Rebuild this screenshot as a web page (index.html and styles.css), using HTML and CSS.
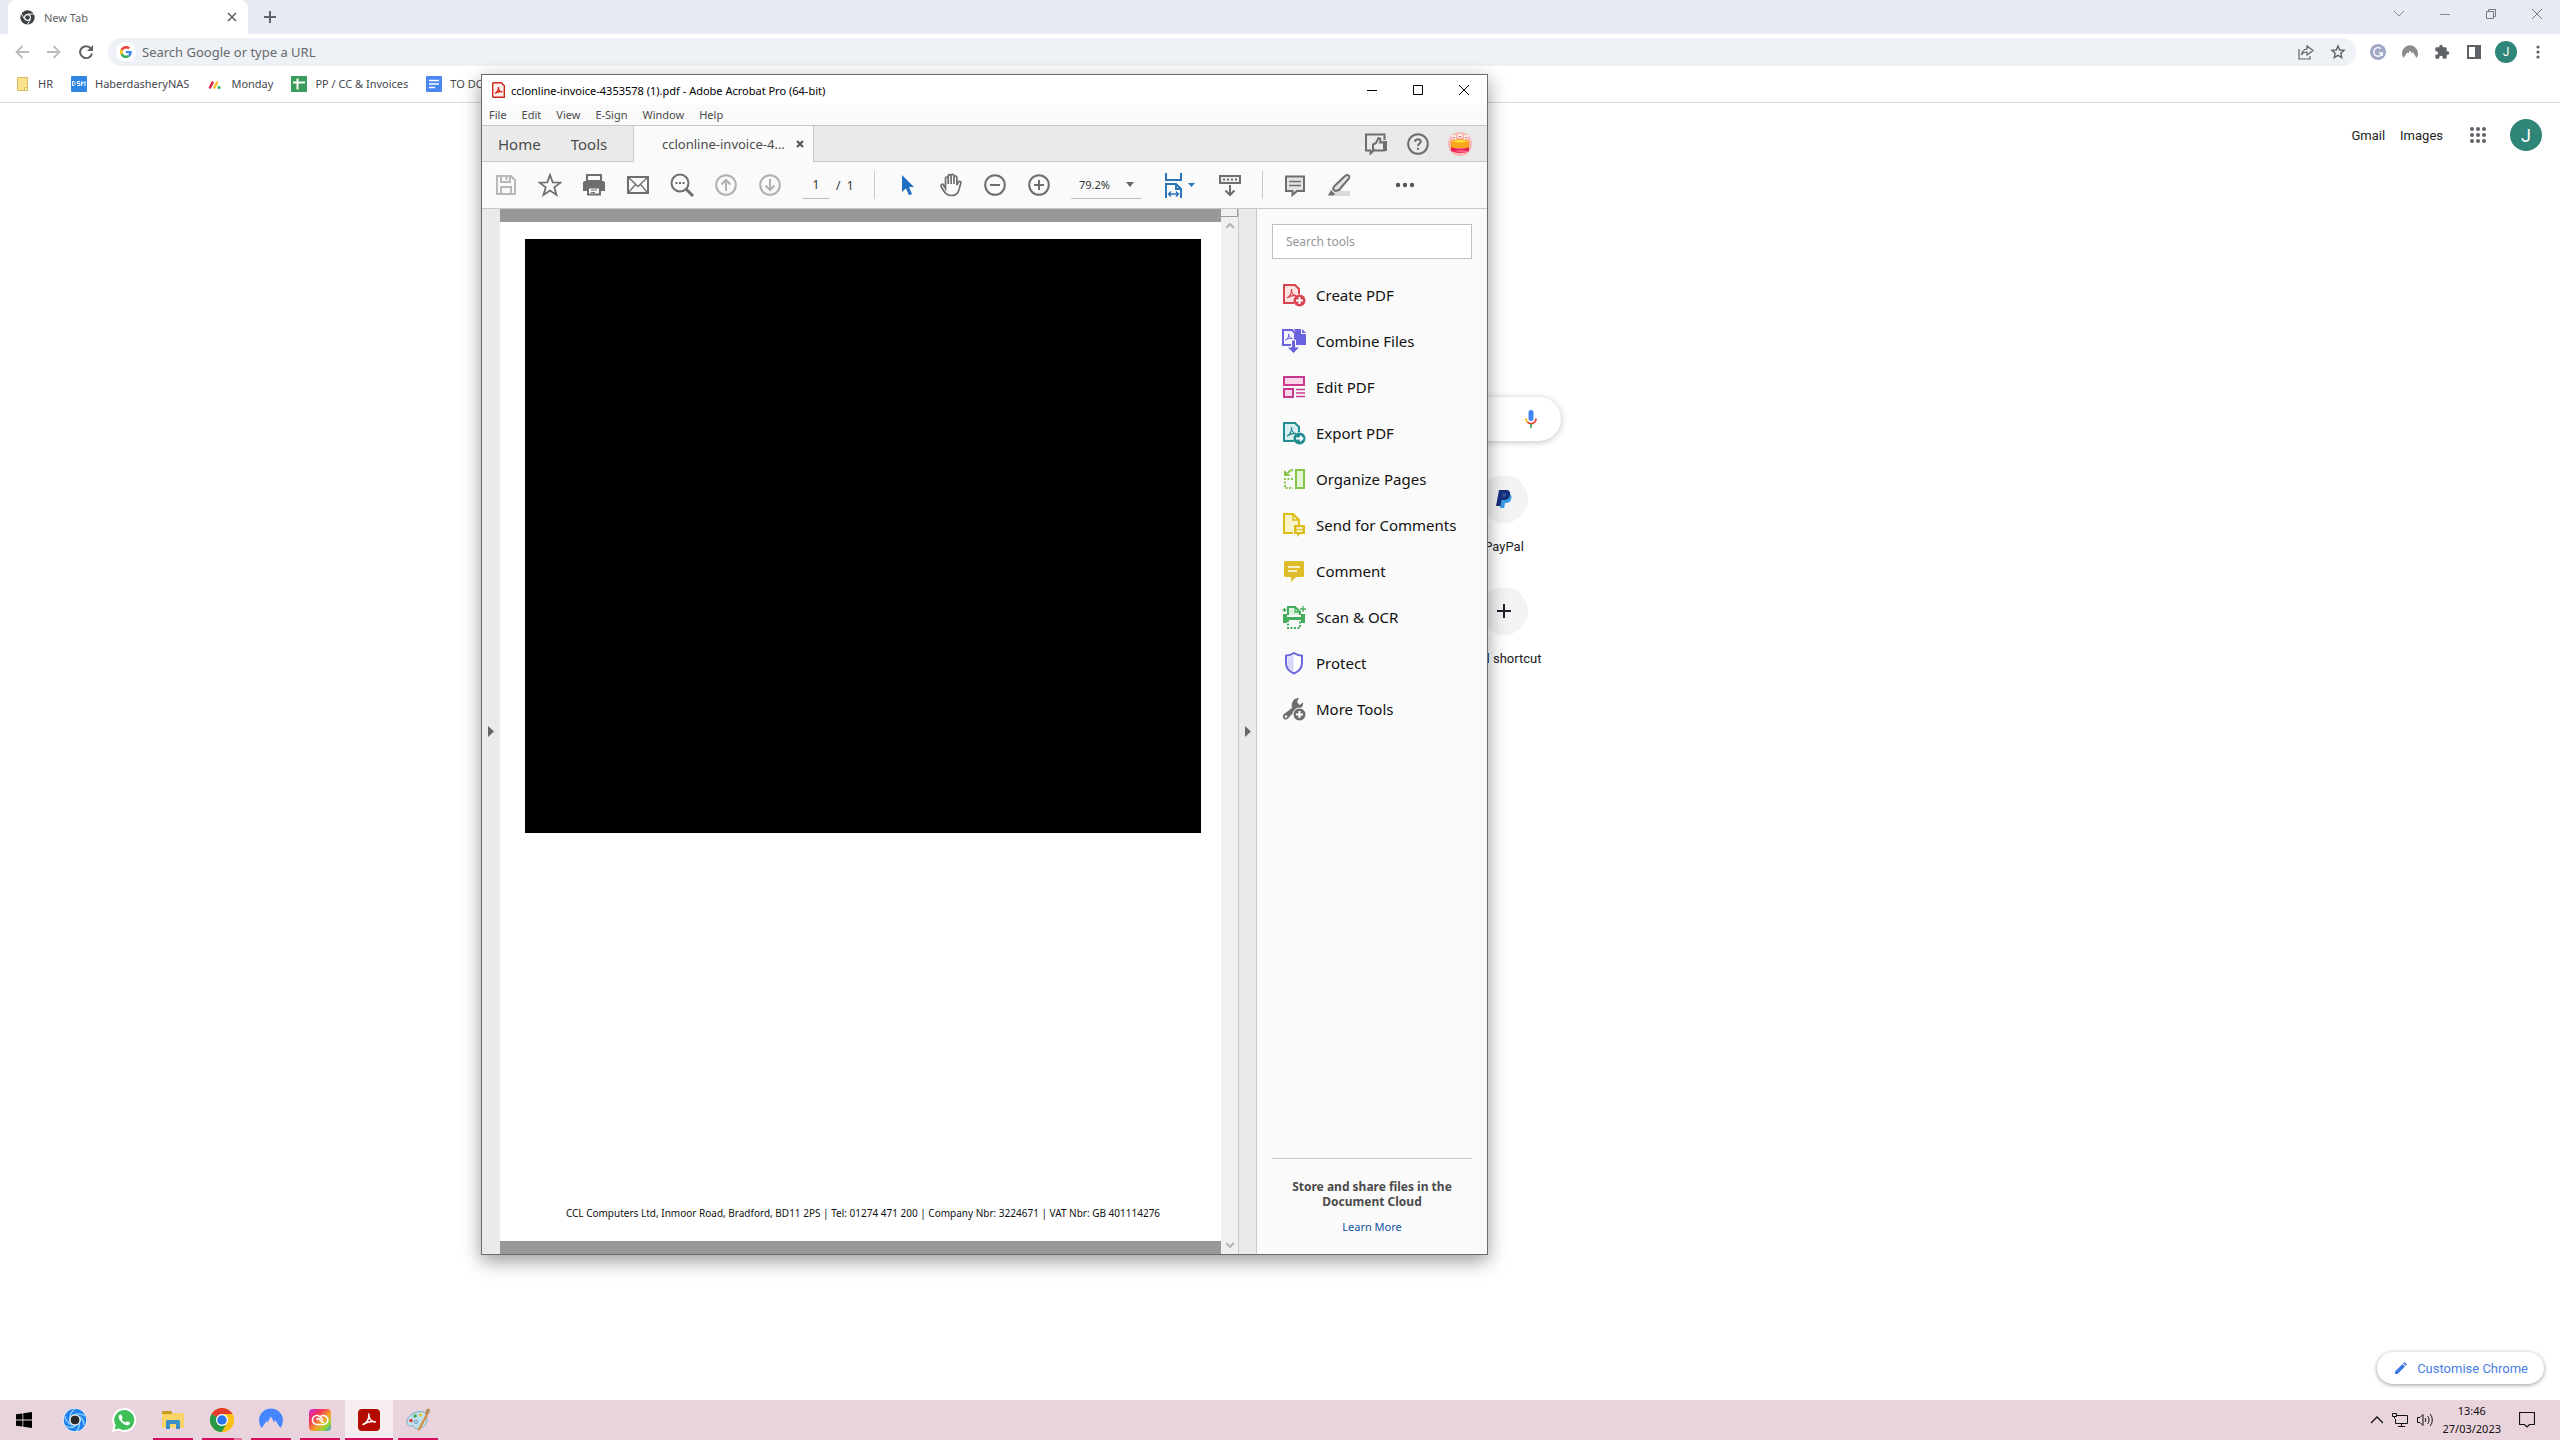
FILE: index.html
```html
<!DOCTYPE html>
<html lang="en">
<head>
    <meta charset="UTF-8">
    <meta name="viewport" content="width=device-width, initial-scale=1.0">
    <title>New Tab</title>
    <link rel="stylesheet" href="styles.css">
</head>
<body>
    <div class="desktop">

    <!-- Browser -->
    <div class="browser">
        <div class="tab-strip">
            <div class="browser-tab">
                <svg class="tab-logo" viewBox="0 0 48 48"><circle cx="24" cy="24" r="23" fill="#3c4043"/><circle cx="24" cy="24" r="11" fill="#fff"/><circle cx="24" cy="24" r="7.500" fill="#3c4043"/><path d="M24 13h22M14.500 29.500l-11-19M33.500 29.500l-11 19" stroke="#fff" stroke-width="3" fill="none"/></svg>
                <span class="tab-title">New Tab</span>
                <button class="plain" aria-label="Close tab"><svg width="10" height="10" viewBox="0 0 10 10"><path d="M1 1l8 8M9 1l-8 8" stroke="#5f6368" stroke-width="1.600"/></svg></button>
            </div>
            <button class="plain new-tab" aria-label="New tab"><svg width="12" height="12" viewBox="0 0 12 12"><path d="M6 0v12M0 6h12" stroke="#5f6368" stroke-width="2"/></svg></button>
            <div class="browser-controls">
                <button class="plain" aria-label="Search tabs"><svg width="10" height="10" viewBox="0 0 10 10"><path d="M0 2l5 5 5-5" stroke="#8a8d93" fill="none"/></svg></button>
                <button class="plain" aria-label="Minimise"><svg width="10" height="10" viewBox="0 0 10 10"><path d="M0 5.500h10" stroke="#8a8d93"/></svg></button>
                <button class="plain" aria-label="Restore"><svg width="10" height="10" viewBox="0 0 10 10"><path d="M.5 2.500h7v7h-7zM2.500 2.500v-2h7v7h-2" stroke="#777a80" fill="none"/></svg></button>
                <button class="plain" aria-label="Close"><svg width="10" height="10" viewBox="0 0 10 10"><path d="M0 0l10 10M10 0L0 10" stroke="#777a80"/></svg></button>
            </div>
        </div>

        <div class="nav-bar">
            <div class="nav-buttons">
                <button class="plain" aria-label="Back"><svg width="14" height="14" viewBox="0 0 14 14"><path d="M14 7H1.500M7.500 1l-6 6 6 6" stroke="#b9bbbe" stroke-width="1.800" fill="none"/></svg></button>
                <button class="plain" aria-label="Forward"><svg width="14" height="14" viewBox="0 0 14 14"><path d="M0 7h12.500M6.500 1l6 6-6 6" stroke="#b9bbbe" stroke-width="1.800" fill="none"/></svg></button>
                <button class="plain" aria-label="Reload"><svg width="14" height="14" viewBox="0 0 14 14"><path d="M12 3.600A6 6 0 1 0 13 8.500" stroke="#5f6368" stroke-width="2" fill="none"/><path d="M14 0v6H8z" fill="#5f6368"/></svg></button>
            </div>
            <div class="omnibox">
                <span class="g-badge"><svg width="12" height="12" viewBox="0 0 48 48"><path fill="#ea4335" d="M24 9.500c3.540 0 6.710 1.220 9.210 3.600l6.850-6.850C35.900 2.380 30.470 0 24 0 14.620 0 6.510 5.380 2.560 13.220l7.980 6.190C12.430 13.720 17.740 9.500 24 9.500z"/><path fill="#4285f4" d="M46.980 24.550c0-1.570-.15-3.090-.38-4.550H24v9.020h12.940c-.58 2.960-2.260 5.480-4.780 7.180l7.730 6c4.510-4.180 7.090-10.360 7.090-17.650z"/><path fill="#fbbc05" d="M10.530 28.590a14.500 14.500 0 0 1 0-9.180l-7.980-6.190a24 24 0 0 0 0 21.560z"/><path fill="#34a853" d="M24 48c6.480 0 11.930-2.130 15.890-5.810l-7.730-6c-2.150 1.450-4.920 2.300-8.160 2.300-6.260 0-11.570-4.220-13.470-9.910l-7.980 6.190C6.510 42.620 14.620 48 24 48z"/></svg></span>
                <input class="omnibox-input" type="text" placeholder="Search Google or type a URL" aria-label="Search Google or type a URL">
                <button class="plain" aria-label="Share"><svg width="16" height="16" viewBox="0 0 16 16"><path d="M1 5v10h11v-3M9 5V2l6 4.500L9 11V8C6 8 4.500 9 3.500 11 4 7.500 6 5.300 9 5z" stroke="#5f6368" stroke-width="1.200" fill="none"/></svg></button>
                <button class="plain" aria-label="Bookmark"><svg width="16" height="16" viewBox="0 0 16 16"><path d="M8 2l1.700 4 4.400.4-3.300 2.900 1 4.200L8 11.300l-3.800 2.200 1-4.200-3.300-2.900 4.400-.4z" stroke="#5f6368" stroke-width="1.400" fill="none"/></svg></button>
            </div>
            <div class="extensions">
                <button class="plain" aria-label="Grammarly"><svg width="16" height="16" viewBox="0 0 16 16"><circle cx="8" cy="8" r="8" fill="#a0a7c7"/><path d="M11 4.800A4.300 4.300 0 1 0 12.200 9H8.800M12.200 9v3" stroke="#fff" stroke-width="1.400" fill="none"/></svg></button>
                <button class="plain" aria-label="NordVPN"><svg width="16" height="16" viewBox="0 0 16 16"><path d="M1.500 14A8 8 0 1 1 14.500 14l-3.600-6-1 1.400L8 6.500 6 9.700 5.200 8.300z" fill="#8c8c8c"/></svg></button>
                <button class="plain" aria-label="Extensions"><svg width="16" height="16" viewBox="0 0 24 24"><path d="M20.500 11H19V7a2 2 0 0 0-2-2h-4V3.500a2.500 2.500 0 0 0-5 0V5H4a2 2 0 0 0-2 2v3.800h1.500a2.700 2.700 0 0 1 0 5.400H2V20a2 2 0 0 0 2 2h3.800v-1.500a2.700 2.700 0 0 1 5.400 0V22H17a2 2 0 0 0 2-2v-4h1.500a2.500 2.500 0 0 0 0-5z" fill="#5f6368"/></svg></button>
                <button class="plain" aria-label="Side panel"><svg width="16" height="16" viewBox="0 0 16 16"><path d="M1 1h14v14H1zM3 3v10h6V3z" fill="#5f6368" fill-rule="evenodd"/></svg></button>
                <button class="plain avatar" aria-label="Profile">J</button>
                <button class="plain" aria-label="Menu"><svg width="16" height="16" viewBox="0 0 16 16"><g fill="#5f6368"><circle cx="8" cy="3" r="1.600"/><circle cx="8" cy="8" r="1.600"/><circle cx="8" cy="13" r="1.600"/></g></svg></button>
            </div>
        </div>

        <div class="bookmarks">
            <a class="bookmark" href="#"><svg width="16" height="16" viewBox="0 0 16 16"><path d="M3.500 1.500h10v13h-10z" fill="#fce28e" stroke="#d9bd5b"/><path d="M10.500 11.500h3v3h-3z" fill="#fff3c4" stroke="#d9bd5b"/></svg>HR</a>
            <a class="bookmark" href="#"><svg width="16" height="16" viewBox="0 0 16 16"><rect width="16" height="16" rx="1" fill="#2f86e5"/><path d="M1.500 5.500v4H3l1-1v-2l-1-1zM9 5.500H6.500v2H9v2H6.200M10.700 10V5.500l1.600 2 1.700-2V10" stroke="#fff" fill="none"/></svg>HaberdasheryNAS</a>
            <a class="bookmark" href="#"><svg width="16" height="16" viewBox="0 0 16 16"><path d="M3 11.500l2.500-5" stroke="#e0234e" stroke-width="2.600" stroke-linecap="round"/><path d="M7.500 11.500l2.500-5" stroke="#fbc02d" stroke-width="2.600" stroke-linecap="round"/><circle cx="12" cy="11.500" r="1.500" fill="#27ae60"/></svg>Monday</a>
            <a class="bookmark" href="#"><svg width="16" height="16" viewBox="0 0 16 16"><rect width="16" height="16" rx="1" fill="#3a9b5b"/><path d="M2 6.500h12M6.500 2.500v11" stroke="#fff" stroke-width="2"/></svg>PP / CC &amp; Invoices</a>
            <a class="bookmark" href="#"><svg width="16" height="16" viewBox="0 0 16 16"><rect width="16" height="16" rx="1" fill="#4a86f0"/><path d="M3 4.500h10M3 8h10M3 11.500h6" stroke="#fff" stroke-width="1.700"/></svg>TO DO</a>
        </div>

        <div class="new-tab-page">
            <div class="page-links">
                <a href="#">Gmail</a>
                <a href="#">Images</a>
                <button class="plain apps" aria-label="Google apps"><svg width="16" height="16" viewBox="0 0 16 16"><g fill="#5f6368"><circle cx="2" cy="2" r="2"/><circle cx="8" cy="2" r="2"/><circle cx="14" cy="2" r="2"/><circle cx="2" cy="8" r="2"/><circle cx="8" cy="8" r="2"/><circle cx="14" cy="8" r="2"/><circle cx="2" cy="14" r="2"/><circle cx="8" cy="14" r="2"/><circle cx="14" cy="14" r="2"/></g></svg></button>
                <button class="plain avatar avatar-large" aria-label="Account">J</button>
            </div>
            <div class="fakebox">
                <input class="fakebox-input" type="text" aria-label="Search">
                <button class="plain" aria-label="Search by voice"><svg width="12" height="18" viewBox="0 0 12 18"><rect x="3.500" width="5" height="11" rx="2.500" fill="#4285f4"/><path d="M1 8.500a5 5 0 0 0 1.500 3.700" stroke="#fbbc05" stroke-width="1.700" fill="none"/><path d="M2.500 12.200A5 5 0 0 0 11 8.500" stroke="#ea4335" stroke-width="1.700" fill="none"/><path d="M6 14v4" stroke="#34a853" stroke-width="1.700"/></svg></button>
            </div>
            <div class="shortcuts">
                <a class="shortcut" href="#">
                    <span class="shortcut-icon"><svg width="16" height="18" viewBox="0 0 16 18"><path d="M5 4h7c3 0 4 2 3.300 4.800C14.600 11.600 13 13 10 13H9l-.8 5H4z" fill="#3b9be0"/><path d="M3 0h7c3.500 0 4.600 2 4 5-.7 3.300-2.600 5-6 5H5.500L4.500 16H0z" fill="#14307c"/><path d="M6.500 3.500h2.700c1.300 0 1.600.7 1.400 1.600-.3 1.100-1 1.600-2.400 1.600H6z" fill="#3a539b"/></svg></span>
                    PayPal
                </a>
                <a class="shortcut" href="#">
                    <span class="shortcut-icon"><svg width="14" height="14" viewBox="0 0 14 14"><path d="M7 0v14M0 7h14" stroke="#202124" stroke-width="2"/></svg></span>
                    Add shortcut
                </a>
            </div>
            <button class="customise"><svg width="12" height="12" viewBox="0 0 12 12"><path d="M0 12V9.500L7.500 2 10 4.500 2.500 12zM8.200 1.300L9.500 0 12 2.500l-1.300 1.300z" fill="#3b78e7"/></svg>Customise Chrome</button>
        </div>
    </div>

    <!-- Acrobat window -->
    <div class="acrobat">
        <div class="title-bar">
            <svg width="13" height="16" viewBox="0 0 13 16"><path d="M1.500.7h7.800l3 3v11.600H1.500a.9.9 0 0 1-.8-.9V1.600a.9.900 0 0 1 .8-.9z" fill="#fff0ee" stroke="#c9271b" stroke-width="1.400"/><path d="M3 11.500c2-.6 3.600-3.600 3.400-6.500 0 3 1.500 5 4 5-2.500-.8-5-.2-7.400 1.500z" stroke="#d6261a" stroke-width="1.300" fill="none"/></svg>
            <span class="window-title">cclonline-invoice-4353578 (1).pdf - Adobe Acrobat Pro (64-bit)</span>
            <button class="plain window-button" aria-label="Minimise"><svg width="10" height="10" viewBox="0 0 10 10"><path d="M0 5.500h10" stroke="#000"/></svg></button>
            <button class="plain window-button" aria-label="Maximise"><svg width="10" height="10" viewBox="0 0 10 10"><path d="M.5.500h9v9h-9z" stroke="#000" fill="none"/></svg></button>
            <button class="plain window-button" aria-label="Close"><svg width="10" height="10" viewBox="0 0 10 10"><path d="M0 0l10 10M10 0L0 10" stroke="#000"/></svg></button>
        </div>
        <div class="menu-bar">
            <button class="plain">File</button>
            <button class="plain">Edit</button>
            <button class="plain">View</button>
            <button class="plain">E-Sign</button>
            <button class="plain">Window</button>
            <button class="plain">Help</button>
        </div>
        <div class="doc-tabs">
            <div class="main-tabs">
                <button class="plain">Home</button>
                <button class="plain">Tools</button>
            </div>
            <div class="doc-tab">
                <span class="doc-name">cclonline-invoice-4...</span>
                <button class="plain" aria-label="Close document"><svg width="8" height="8" viewBox="0 0 8 8"><path d="M1 1l6 6M7 1L1 7" stroke="#555" stroke-width="2"/></svg></button>
            </div>
            <div class="tab-tools">
                <button class="plain" aria-label="Feedback"><svg width="24" height="22" viewBox="0 0 24 22"><path d="M20.500 7V1.500H2v16h4.500v3l3-3H9" stroke="#6e6e6e" stroke-width="2" fill="none"/><path d="M9 11.500l3-1.500 2.500-5c2 0 2.300 1.500 1.600 4.500H20v8h-9l-2-1.500z" fill="#eaeaea" stroke="#6e6e6e" stroke-width="2"/><path d="M19 8h4v10h-4z" fill="#6e6e6e"/></svg></button>
                <button class="plain" aria-label="Help"><svg width="22" height="22" viewBox="0 0 22 22"><circle cx="11" cy="11" r="9.800" stroke="#6e6e6e" stroke-width="2" fill="none"/><path d="M8 8.800C8 5.300 14 5.500 13.800 8.600 13.700 10.500 11 10.700 11 13M11 14.700v2" stroke="#6e6e6e" stroke-width="2" fill="none"/></svg></button>
                <button class="plain" aria-label="Account"><svg width="24" height="24" viewBox="0 0 24 24"><circle cx="12" cy="12" r="12" fill="#f8b9b4"/><g fill="#fff"><circle cx="6" cy="5" r="2"/><circle cx="12" cy="4" r="2"/><circle cx="18" cy="5" r="2"/></g><g fill="#c33"><circle cx="6" cy="5.500" r=".8"/><circle cx="12" cy="4.500" r=".8"/><circle cx="18" cy="5.500" r=".8"/></g><path d="M3 9c5-2.500 13-2.500 18 0v7H3z" fill="#f9a51b"/><path d="M4 9c5-1.500 11-1.500 16 0-5 2-11 2-16 0z" fill="#ffdf3e"/><path d="M3 15c5 2 13 2 18 0v4c-5 2.500-13 2.500-18 0z" fill="#e8204f"/><path d="M5 19l12 2 3-2-6-1z" fill="#ff5d8d"/></svg></button>
            </div>
        </div>

        <div class="tool-bar">
            <button class="plain tool" aria-label="Save"><svg width="24" height="24" viewBox="0 0 24 24"><path d="M3 3h14l4 4v14H3zM7 3v6h9V3M7 21v-7h10v7M12.500 4v3" stroke="#b8b8b8" stroke-width="2" fill="none"/></svg></button>
            <button class="plain tool" aria-label="Star"><svg width="24" height="24" viewBox="0 0 24 24"><path d="M12 2l2.700 7.300 7.800.3-6.200 4.800 2.200 7.500L12 17.600l-6.500 4.300 2.200-7.500-6.200-4.800 7.800-.3z" stroke="#6e6e6e" stroke-width="1.800" fill="none"/></svg></button>
            <button class="plain tool" aria-label="Print"><svg width="24" height="24" viewBox="0 0 24 24"><path d="M5 2h14v6H5z" stroke="#6e6e6e" stroke-width="2" fill="none"/><path d="M3 8h18a2 2 0 0 1 2 2v8H1v-8a2 2 0 0 1 2-2z" fill="#6e6e6e"/><path d="M6 14.500h12v7H6z" fill="#fafafa" stroke="#6e6e6e" stroke-width="2"/><path d="M9 17h6M9 19.500h4" stroke="#6e6e6e" stroke-width="1.200"/></svg></button>
            <button class="plain tool" aria-label="Email"><svg width="24" height="24" viewBox="0 0 24 24"><path d="M2 4h20v16H2z" stroke="#6e6e6e" stroke-width="2" fill="none"/><path d="M2 4l10 9.500L22 4M2 20l7.500-8.500M22 20l-7.500-8.500" stroke="#6e6e6e" stroke-width="1.300" fill="none"/></svg></button>
            <button class="plain tool" aria-label="Find"><svg width="24" height="24" viewBox="0 0 24 24"><circle cx="10" cy="10" r="8.500" stroke="#6e6e6e" stroke-width="2" fill="none"/><path d="M16 16l7 7" stroke="#6e6e6e" stroke-width="3"/><path d="M5.500 10h2M9 10h2M12.500 10h2" stroke="#6e6e6e" stroke-width="2"/></svg></button>
            <button class="plain tool" aria-label="Previous page"><svg width="24" height="24" viewBox="0 0 24 24"><circle cx="12" cy="12" r="9.800" stroke="#b0b0b0" stroke-width="2" fill="none"/><path d="M12 18V7M7.500 11.500L12 7l4.500 4.500" stroke="#b0b0b0" stroke-width="2" fill="none"/></svg></button>
            <button class="plain tool" aria-label="Next page"><svg width="24" height="24" viewBox="0 0 24 24"><circle cx="12" cy="12" r="9.800" stroke="#b0b0b0" stroke-width="2" fill="none"/><path d="M12 6v11M7.500 12.500L12 17l4.500-4.500" stroke="#b0b0b0" stroke-width="2" fill="none"/></svg></button>
            <label class="page-box"><input class="page-input" type="text" value="1" aria-label="Page"><span>/&nbsp; 1</span></label>
            <span class="divider"></span>
            <button class="plain tool" aria-label="Select"><svg width="24" height="24" viewBox="0 0 24 24"><path d="M7 2l12 12h-5l3 7-3 1.200-3-7L7 19z" fill="#1f6fc2"/></svg></button>
            <button class="plain tool" aria-label="Hand"><svg width="24" height="24" viewBox="0 0 24 24"><path d="M6.500 15.500V5.500c0-2 2.700-2 2.700 0V11 3.200c0-2 2.900-2 2.900 0V11 2.800c0-2 2.900-2 2.900 0V11 4.500c0-2 2.900-2 2.900 0V12l1.300-2.500c1-1.800 3.300-1 2.600.8C20 15 20.500 22.500 13 22.500c-6 0-8-3.500-10.800-9-.9-2 1.200-3 2.300-1.500z" stroke="#6e6e6e" stroke-width="1.700" fill="none"/></svg></button>
            <button class="plain tool" aria-label="Zoom out"><svg width="24" height="24" viewBox="0 0 24 24"><circle cx="12" cy="12" r="9.800" stroke="#6e6e6e" stroke-width="2" fill="none"/><path d="M7 12h10" stroke="#6e6e6e" stroke-width="2"/></svg></button>
            <button class="plain tool" aria-label="Zoom in"><svg width="24" height="24" viewBox="0 0 24 24"><circle cx="12" cy="12" r="9.800" stroke="#6e6e6e" stroke-width="2" fill="none"/><path d="M7 12h10M12 7v10" stroke="#6e6e6e" stroke-width="2"/></svg></button>
            <button class="zoom-level">79.2%<svg width="8" height="5" viewBox="0 0 8 5"><path d="M0 0h8L4 5z" fill="#666"/></svg></button>
            <button class="plain fit" aria-label="Fit width"><svg width="30" height="26" viewBox="0 0 30 26"><path d="M1 1v7h15V1M1 26V12h10l5 5v9M11 12v5h5" stroke="#2a74b8" stroke-width="2" fill="none"/><path d="M4 22h9M6 19.500L3.500 22 6 24.500M11 19.500l2.500 2.500-2.500 2.500" stroke="#2a74b8" stroke-width="1.400" fill="none"/><path d="M23 11h7l-3.500 4z" fill="#2a74b8"/></svg></button>
            <button class="plain tool" aria-label="Page display"><svg width="24" height="24" viewBox="0 0 24 24"><path d="M2 3h20v7H2z" stroke="#6e6e6e" stroke-width="2" fill="#eee"/><path d="M5 6.500h2M9 6.500h2M13 6.500h2M17 6.500h2" stroke="#6e6e6e" stroke-width="2"/><path d="M12 12v10M7.500 17.500L12 22l4.500-4.500" stroke="#6e6e6e" stroke-width="2" fill="none"/></svg></button>
            <span class="divider divider-wide"></span>
            <button class="plain tool" aria-label="Add comment"><svg width="24" height="24" viewBox="0 0 24 24"><path d="M3 3.500h18V18h-7l-4.500 4V18H3z" stroke="#6e6e6e" stroke-width="2" fill="#e4e4e4"/><path d="M6 8.500h12M6 12.500h12" stroke="#6e6e6e" stroke-width="1.500"/></svg></button>
            <button class="plain tool" aria-label="Highlight"><svg width="24" height="24" viewBox="0 0 24 24"><path d="M8 18h15v5H6z" fill="#dadada"/><path d="M7 13.500L18 3c3-2.500 5.500 0 3.500 3L12 17l-4 1-2-2z" stroke="#6e6e6e" stroke-width="2" fill="#e4e4e4"/><path d="M4 17l4 4-2 1.500H1z" fill="#6e6e6e"/></svg></button>
            <button class="plain more" aria-label="More"><svg width="20" height="6" viewBox="0 0 20 6"><g fill="#555"><circle cx="3" cy="3" r="2.200"/><circle cx="10" cy="3" r="2.200"/><circle cx="17" cy="3" r="2.200"/></g></svg></button>
        </div>

        <div class="workspace">
            <button class="side-strip" aria-label="Show navigation pane"><svg width="6" height="11" viewBox="0 0 6 11"><path d="M0 0l6 5.500L0 11z" fill="#666"/></svg></button>
            <div class="document">
                <div class="page">
                    <div class="redacted"></div>
                    <p class="page-footer">CCL Computers Ltd, Inmoor Road, Bradford, BD11 2PS | Tel: 01274 471 200 | Company Nbr: 3224671 | VAT Nbr: GB 401114276</p>
                </div>
            </div>
            <div class="scroll-track">
                <div class="scroll-top">
                    <span class="split-box"></span>
                    <svg width="8" height="6" viewBox="0 0 8 6"><path d="M0 5l4-4 4 4" stroke="#b5b5b5" stroke-width="2" fill="none"/></svg>
                </div>
                <svg width="8" height="6" viewBox="0 0 8 6"><path d="M0 1l4 4 4-4" stroke="#b5b5b5" stroke-width="2" fill="none"/></svg>
            </div>
            <button class="side-strip side-strip-right" aria-label="Hide tools pane"><svg width="6" height="11" viewBox="0 0 6 11"><path d="M0 0l6 5.500L0 11z" fill="#666"/></svg></button>
            <div class="tools-panel">
                <input class="tool-search" type="text" placeholder="Search tools" aria-label="Search tools">
                <div class="tool-list">
                    <button class="plain tool-item"><svg width="24" height="24" viewBox="0 0 24 24"><path d="M12 20H2V2h11l4 4v5" stroke="#d7434e" stroke-width="2" fill="#fde3e3"/><path d="M5 15c3-1 5-5 4.500-9 0 4 2 6.500 4.500 6.500-3-.5-6 .5-9 2.500z" stroke="#d7434e" stroke-width="1.200" fill="none"/><circle cx="17.500" cy="17.500" r="6" fill="#d7434e"/><path d="M17.500 14v7M14 17.500h7" stroke="#fff" stroke-width="2"/></svg>Create PDF</button>
                    <button class="plain tool-item"><svg width="24" height="24" viewBox="0 0 24 24"><path d="M1 1h9l3 3v12H1z" stroke="#6a63e0" stroke-width="2" fill="#f6f5ff"/><path d="M3.500 11c2-.7 3.500-3.300 3.200-6 0 2.700 1.300 4.500 3.800 4.500-2-.3-4.500 0-7 1.500z" stroke="#6a63e0" fill="none"/><path d="M12 0h7v5h5v11H14V4z" fill="#6a63e0"/><path d="M20 0l4 4h-4z" fill="#6a63e0"/><path d="M9.500 11h4v7h4.500l-6.500 6.500L5 18h4.500z" fill="#6a63e0" stroke="#fff"/></svg>Combine Files</button>
                    <button class="plain tool-item"><svg width="24" height="24" viewBox="0 0 24 24"><path d="M2 2h20v8H2zM2 14h9v8H2z" stroke="#c8388d" stroke-width="2" fill="#fbd5ea"/><path d="M14 14.500h9M14 18h9M14 21.500h9" stroke="#c8388d" stroke-width="1.300"/></svg>Edit PDF</button>
                    <button class="plain tool-item"><svg width="24" height="24" viewBox="0 0 24 24"><path d="M12 20H2V2h11l4 4v5" stroke="#208d8f" stroke-width="2" fill="#d9efef"/><path d="M5 15c3-1 5-5 4.500-9 0 4 2 6.500 4.500 6.500-3-.5-6 .5-9 2.500z" stroke="#208d8f" stroke-width="1.200" fill="none"/><circle cx="17.500" cy="17.500" r="6" fill="#208d8f"/><path d="M14 17.500h6M18 15l2.500 2.500L18 20" stroke="#fff" stroke-width="1.800" fill="none"/></svg>Export PDF</button>
                    <button class="plain tool-item"><svg width="24" height="24" viewBox="0 0 24 24"><path d="M14 3h8v18h-8z" stroke="#84c64a" stroke-width="2" fill="#e4f6d4"/><path d="M11 12H3v9h8" stroke="#84c64a" stroke-width="2" stroke-dasharray="2 1.500" fill="none"/><path d="M11 3c-3 0-4 1-5 3" stroke="#84c64a" stroke-width="2" fill="none"/><path d="M2 3v6h7z" fill="#84c64a"/></svg>Organize Pages</button>
                    <button class="plain tool-item"><svg width="24" height="24" viewBox="0 0 24 24"><path d="M11 20H2V1h9l6 6v5" stroke="#dcbc16" stroke-width="2" fill="#fbf3c8"/><path d="M11 1v6h6" stroke="#dcbc16" stroke-width="1.500" fill="none"/><path d="M12 12h11v9h-5l-3 3v-3h-3z" fill="#dcbc16"/><path d="M14.500 15h6M14.500 18h6" stroke="#fff" stroke-width="1.300"/></svg>Send for Comments</button>
                    <button class="plain tool-item"><svg width="24" height="24" viewBox="0 0 24 24"><path d="M3 2h18l1 1v14l-1 1h-7l-5 5v-5H3l-1-1V3z" fill="#dfbd2a"/><path d="M6 8h12M6 12h9" stroke="#fff" stroke-width="1.600"/></svg>Comment</button>
                    <button class="plain tool-item"><svg width="24" height="24" viewBox="0 0 24 24"><path d="M6 10V2h7l5 5v3" stroke="#43ad5b" stroke-width="2" fill="#d8f2dd"/><path d="M1 9h4v3h14V9h4v9h-4v-3H5v3H1z" fill="#43ad5b"/><path d="M6 15v8h12v-8" stroke="#43ad5b" stroke-width="2" stroke-dasharray="2 1.500" fill="none"/><path d="M13 2v5h5M21 1v6M18 4h6M2.500 3v4M.5 5h4" stroke="#43ad5b" stroke-width="1.300" fill="none"/></svg>Scan &amp; OCR</button>
                    <button class="plain tool-item"><svg width="24" height="24" viewBox="0 0 24 24"><path d="M12 2c2.500 1.800 5 2.500 8 2.700V12c0 5-3.500 8.500-8 10.500C7.500 20.500 4 17 4 12V4.700C7 4.500 9.500 3.800 12 2z" stroke="#6c66de" stroke-width="2" fill="#fff"/><path d="M11.500 4C9.500 5.300 7.500 6 5.500 6v6c0 4 2.500 7 6 8.800z" fill="#d9d7f8"/></svg>Protect</button>
                    <button class="plain tool-item"><svg width="24" height="24" viewBox="0 0 24 24"><path d="M2 22c-2-2-1-4 0-5l8-6C9 6 11 1 17 1l-2 4 2.500 3L21 5.500c.5 3-1 5.500-4 6a8 8 0 0 0-5.500 4L6 21.500c-1 1-3 1.500-4 .5z" fill="#6e6e6e"/><circle cx="4" cy="19.500" r="1.200" fill="#fff"/><circle cx="17.500" cy="17.500" r="6.500" fill="#6e6e6e" stroke="#fafafa"/><path d="M17.500 14v7M14 17.500h7" stroke="#fff" stroke-width="2"/></svg>More Tools</button>
                </div>
                <div class="cloud-note">
                    <strong>Store and share files in the Document Cloud</strong>
                    <a href="#">Learn More</a>
                </div>
            </div>
        </div>
    </div>

    <!-- Taskbar -->
    <div class="taskbar">
        <button class="task task-start" aria-label="Start"><svg width="16" height="16" viewBox="0 0 16 16"><path d="M0 2.300L6.500 1.400v6.100H0zM7.300 1.300L16 0v7.500H7.300zM0 8.400h6.500v6.200L0 13.700zM7.300 8.400H16V16l-8.700-1.300z" fill="#000"/></svg></button>
        <button class="task" aria-label="KeyShot"><svg width="24" height="24" viewBox="0 0 24 24"><circle cx="12" cy="12" r="12" fill="#f0f4fa"/><circle cx="12" cy="12" r="8.500" stroke="#2080ee" stroke-width="5.500" fill="none"/><path d="M12 1c-3 2-5 5-5 9M22 8c-3-2-7-3-11-1M21 17c0-4-2-7-5-9M13 23c3-2 4-6 3-10M3 18c3 2 7 2 10-1M2 8c0 4 3 7 7 9" stroke="#8fd2fb" stroke-width="1.400" fill="none"/><circle cx="12" cy="12" r="5" fill="#292929" stroke="#fff"/></svg></button>
        <button class="task" aria-label="WhatsApp"><svg width="24" height="24" viewBox="0 0 24 24"><path d="M12 0a12 12 0 1 1-5.500 22.500L0 24l1.500-6.500A12 12 0 0 1 12 0z" fill="#fff"/><path d="M12 2a10 10 0 1 1-5 18.500L2.700 21.500l1-4.300A10 10 0 0 1 12 2z" fill="#3fbf58"/><path d="M8 6.500c-2 1.500-1.500 4 .5 6.500 2.500 3 5.500 5 8 4 2-1 1.500-2.500 1-2.800l-2.300-1c-.7 0-1 1.500-2 1.300-1.500-.5-3-2-3.500-3.200 0-.8 1-1 1-1.800L9.500 7c-.3-.7-1-.7-1.500-.5z" fill="#fff"/></svg></button>
        <button class="task task-open" aria-label="File Explorer"><svg width="24" height="24" viewBox="0 0 24 24"><path d="M1 5V3.500L2 3h8l1 1v3H1z" fill="#c99a1c"/><path d="M1 6h10l2-1h9l1 1v14H1z" fill="#fbd469"/><path d="M5 21v-8l1-1h12l1 1v8h-4v-5H9v5z" fill="#3c8ec9"/></svg></button>
        <button class="task task-open task-group" aria-label="Google Chrome"><svg width="24" height="24" viewBox="0 0 48 48"><circle cx="24" cy="24" r="24" fill="#fbc116"/><path d="M24 24L3.200 12A24 24 0 0 1 44.800 12z" fill="#e33b2e"/><path d="M3.200 12A24 24 0 0 0 24 48l10.400-18L24 24z" fill="#279847"/><path d="M44.800 12H24v12l10.400 6L24 48A24 24 0 0 0 44.800 12z" fill="#fbc116"/><circle cx="24" cy="24" r="12" fill="#fff"/><circle cx="24" cy="24" r="9.500" fill="#2d72e8"/></svg></button>
        <button class="task task-open" aria-label="NordVPN"><svg width="24" height="24" viewBox="0 0 24 24"><path d="M2.700 20A12 12 0 1 1 21.300 20l-5-8-1.300 2.200L12 8.500l-3.500 6L7.700 13z" fill="#4687ff"/></svg></button>
        <button class="task task-open" aria-label="Creative Cloud"><svg width="24" height="24" viewBox="0 0 24 24"><defs><linearGradient id="cc" x1="0" y1="0" x2="1" y2="1"><stop offset="0" stop-color="#d32be0"/><stop offset=".3" stop-color="#f0325a"/><stop offset=".6" stop-color="#f5a623"/><stop offset=".8" stop-color="#8ed83a"/><stop offset="1" stop-color="#2a8cf0"/></linearGradient></defs><rect x="1" y="1" width="22" height="22" rx="4" fill="url(#cc)"/><path d="M9 16.500a4.500 4.500 0 0 1 0-9c2.500 0 3.500 1.500 6 4.500M9 16.500h6.500a4.500 4.500 0 1 0-3.500-7.500M9 12c0-2 2-2 3 0 1.500 2 2.500 2.500 4 2" stroke="#fff" stroke-width="1.700" fill="none"/></svg></button>
        <button class="task task-open task-active" aria-label="Adobe Acrobat"><svg width="24" height="24" viewBox="0 0 24 24"><rect x="1" y="1" width="22" height="22" rx="4" fill="#b30b00"/><path d="M6 16.500c4-1.500 6.500-6 5.800-10.500 0 5 2.700 8 6.700 8-4-1-8.500 0-12.500 2.500z" stroke="#fff" stroke-width="1.500" stroke-linejoin="round" fill="none"/></svg></button>
        <button class="task task-open" aria-label="Paint"><svg width="24" height="24" viewBox="0 0 24 24"><path d="M11 4c7-2 11 2 10 8s-5 9-10 9c-3 0-2-3-4-3s-5 1-6-3c-1-5 4-9.500 10-11z" fill="#bfe0ee" stroke="#83aebf"/><circle cx="5" cy="12.500" r="1.800" fill="#d93a3a"/><circle cx="9" cy="8" r="1.800" fill="#4da84d"/><circle cx="14.500" cy="6.800" r="1.600" fill="#e8c23a"/><circle cx="10" cy="14" r="1.500" fill="#fff" stroke="#4e86c0"/><path d="M12 21l8-15 2 1-8 15-2 1z" fill="#d98c3d"/><path d="M19 6l1-4 3-2 1 3-2 4z" fill="#b98b5a"/></svg></button>
        <div class="tray">
            <button class="plain" aria-label="Show hidden icons"><svg width="12" height="8" viewBox="0 0 12 8"><path d="M0 7l6-6 6 6" stroke="#111" stroke-width="1.300" fill="none"/></svg></button>
            <button class="plain" aria-label="Network"><svg width="16" height="14" viewBox="0 0 16 14"><path d="M5 2.500h10.500v8H3.500V6M9.500 10.500v3M6 13.500h7M.5.500h4v3h-4zM2.500 3.500v2" stroke="#111" fill="none"/></svg></button>
            <button class="plain" aria-label="Volume"><svg width="16" height="14" viewBox="0 0 16 14"><path d="M.5 4.500H3l3-3v11l-3-3H.5zM8 5c1 1 1 3 0 4M10.500 3c2 2 2 6 0 8M13 1c3 3 3 9 0 12" stroke="#111" fill="none"/></svg></button>
            <div class="clock"><span>13:46</span><span>27/03/2023</span></div>
            <button class="plain" aria-label="Notifications"><svg width="16" height="16" viewBox="0 0 16 16"><path d="M.5.500h15v12h-5L8 15l-2.500-2.500h-5z" stroke="#111" stroke-width="1.200" fill="none"/></svg></button>
        </div>
    </div>

    </div>
</body>
</html>
```
FILE: styles.css
```css
* {
    box-sizing: border-box;
}

body {
    margin: 0;
    background: #fff;
    font-family: "Noto Sans", "Open Sans", sans-serif;
    font-size: 12px;
    color: #222;
}

a {
    color: inherit;
    text-decoration: none;
}

svg {
    display: block;
    flex-shrink: 0;
}

button,
input {
    font: inherit;
    color: inherit;
}

.plain {
    display: flex;
    align-items: center;
    justify-content: center;
    padding: 0;
    border: none;
    background: none;
}

.desktop {
    position: relative;
    display: flex;
    flex-direction: column;
    min-height: 100vh;
}

/* Browser */

.browser {
    flex: 1;
    display: flex;
    flex-direction: column;
}

.tab-strip {
    display: flex;
    height: 34px;
    padding-left: 8px;
    background: #e7eaf2;
}

.browser-tab {
    display: flex;
    align-items: center;
    width: 240px;
    padding: 0 11px 0 12px;
    gap: 9px;
    background: #fff;
    border-radius: 8px 8px 0 0;
}

.tab-logo {
    width: 15px;
    height: 15px;
}

.tab-title {
    flex: 1;
    font-size: 11px;
    color: #5f6368;
}

.new-tab {
    width: 44px;
}

.browser-controls {
    display: flex;
    gap: 36px;
    margin-left: auto;
    padding: 0 18px 6px 0;
}

.nav-bar {
    display: flex;
    align-items: center;
    height: 34px;
    padding: 2px 14px 0 15px;
}

.nav-buttons {
    display: flex;
    gap: 18px;
    margin-right: 15px;
}

.omnibox {
    flex: 1;
    display: flex;
    align-items: center;
    gap: 16px;
    height: 28px;
    padding: 0 10px 0 8px;
    border-radius: 14px;
    background: #eef1f5;
}

.g-badge {
    display: flex;
    align-items: center;
    justify-content: center;
    width: 20px;
    height: 20px;
    border-radius: 50%;
    background: #fff;
}

.omnibox-input {
    flex: 1;
    margin-left: -10px;
    padding: 0;
    border: none;
    background: none;
    font-size: 13px;
}

.omnibox-input::placeholder {
    color: #666a6f;
}

.extensions {
    display: flex;
    align-items: center;
    gap: 16px;
    margin-left: 14px;
}

.avatar {
    width: 22px;
    height: 22px;
    margin: 0 -3px;
    border-radius: 50%;
    background: #2f8577;
    color: #fff;
    font-family: Roboto, sans-serif;
    font-size: 12px;
}

.bookmarks {
    display: flex;
    align-items: center;
    gap: 18px;
    height: 35px;
    padding: 0 14px 3px;
    border-bottom: 1px solid #d5d7da;
    color: #45484d;
}

.bookmark {
    display: flex;
    align-items: center;
    gap: 8px;
    font-size: 11px;
}

.new-tab-page {
    flex: 1;
    display: flex;
    flex-direction: column;
    font-family: Roboto, sans-serif;
    font-size: 13px;
}

.page-links {
    display: flex;
    align-items: center;
    justify-content: flex-end;
    gap: 15px;
    padding: 16px 18px 0 0;
}

.apps {
    margin: 0 9px 0 12px;
}

.avatar-large {
    width: 32px;
    height: 32px;
    margin: 0;
    font-size: 18px;
}

.fakebox {
    align-self: center;
    display: flex;
    align-items: center;
    width: 562px;
    height: 44px;
    margin-top: 246px;
    padding: 0 24px;
    border-radius: 22px;
    box-shadow: 0 1px 6px rgba(32, 33, 36, 0.28);
}

.fakebox-input {
    flex: 1;
    border: none;
    background: none;
}

.shortcuts {
    align-self: center;
    display: grid;
    justify-items: end;
    width: 560px;
    margin-top: 34px;
    color: #202124;
}

.shortcut {
    display: flex;
    flex-direction: column;
    align-items: center;
    gap: 16px;
    width: 112px;
    height: 112px;
}

.shortcut-icon {
    display: flex;
    align-items: center;
    justify-content: center;
    width: 48px;
    height: 48px;
    border-radius: 50%;
    background: #f1f3f4;
}

.customise {
    align-self: flex-end;
    display: flex;
    align-items: center;
    gap: 10px;
    height: 32px;
    margin: auto 16px 16px 0;
    padding: 0 16px 0 18px;
    border: none;
    border-radius: 16px;
    background: #fff;
    box-shadow: 0 1px 4px rgba(0, 0, 0, 0.4);
    color: #4a80e8;
}

/* Acrobat window */

.acrobat {
    position: absolute;
    top: 74px;
    left: 481px;
    display: flex;
    flex-direction: column;
    width: 1007px;
    height: 1181px;
    border: 1px solid #6c6c6c;
    background: #fafafa;
    box-shadow: 0 6px 18px rgba(0, 0, 0, 0.4);
}

.title-bar {
    display: flex;
    align-items: center;
    height: 30px;
    padding-left: 10px;
    background: #fff;
    color: #000;
}

.window-title {
    flex: 1;
    margin-left: 6px;
    font-size: 11px;
}

.window-button {
    width: 46px;
    height: 30px;
}

.menu-bar {
    display: flex;
    align-items: center;
    gap: 15px;
    height: 21px;
    padding: 0 0 2px 7px;
    border-bottom: 1px solid #c8c8c8;
    font-size: 11px;
    color: #4b4b4b;
}

.doc-tabs {
    display: flex;
    height: 36px;
    background: #eaeaea;
    color: #4b4b4b;
}

.main-tabs {
    display: flex;
    gap: 30px;
    width: 151px;
    padding-left: 16px;
    border-bottom: 1px solid #c8c8c8;
    font-size: 15px;
}

.doc-tab {
    display: flex;
    align-items: center;
    justify-content: space-between;
    width: 181px;
    padding: 0 9px 0 28px;
    border: solid #c8c8c8;
    border-width: 0 1px;
    background: #fafafa;
}

.doc-name {
    font-size: 13px;
}

.tab-tools {
    flex: 1;
    display: flex;
    align-items: center;
    justify-content: flex-end;
    gap: 19px;
    padding-right: 15px;
    border-bottom: 1px solid #c8c8c8;
}

.tool-bar {
    display: flex;
    align-items: center;
    height: 47px;
    padding-left: 12px;
    border-bottom: 1px solid #c8c8c8;
    color: #333;
}

.tool {
    width: 24px;
    margin-right: 20px;
}

.page-box {
    display: flex;
    align-items: center;
    gap: 6px;
    width: 52px;
    white-space: nowrap;
}

.page-input {
    width: 28px;
    height: 28px;
    padding: 0;
    border: none;
    border-bottom: 1px solid #c0c0c0;
    background: none;
    text-align: center;
}

.divider {
    width: 1px;
    height: 28px;
    margin: 0 20px;
    background: #c8c8c8;
}

.zoom-level {
    display: flex;
    align-items: center;
    justify-content: space-between;
    width: 71px;
    height: 28px;
    padding: 0 8px;
    border: none;
    border-bottom: 1px solid #c0c0c0;
    background: none;
    font-size: 11px;
}

.fit {
    margin: 0 23px;
}

.divider-wide {
    margin: 0 20px 0 0;
}

.more {
    margin-left: 24px;
}

.workspace {
    flex: 1;
    display: flex;
}

.side-strip {
    display: flex;
    align-items: center;
    justify-content: center;
    width: 18px;
    padding: 0;
    border: none;
    background: #eaeaea;
}

.side-strip-right {
    width: 19px;
    border: solid #c8c8c8;
    border-width: 0 1px;
}

.document {
    flex: 1;
    display: flex;
    padding: 13px 0;
    background: #989898;
}

.page {
    flex: 1;
    display: flex;
    flex-direction: column;
    justify-content: space-between;
    padding: 17px 20px 18px 25px;
    background: #fff;
}

.redacted {
    height: 594px;
    background: #000;
}

.page-footer {
    margin: 0;
    text-align: center;
    font-size: 10px;
    line-height: 20px;
    color: #111;
}

.scroll-track {
    display: flex;
    flex-direction: column;
    align-items: center;
    justify-content: space-between;
    width: 17px;
    padding-bottom: 6px;
    background: #f0f0f0;
}

.scroll-top {
    display: flex;
    flex-direction: column;
    align-items: center;
    gap: 6px;
}

.split-box {
    width: 17px;
    height: 8px;
    border: solid #999;
    border-width: 0 1px 1px 0;
}

.tools-panel {
    display: flex;
    flex-direction: column;
    width: 230px;
    padding: 15px;
}

.tool-search {
    width: 100%;
    height: 35px;
    padding: 0 13px;
    border: 1px solid #c0c0c0;
    background: #fff;
}

.tool-search::placeholder {
    color: #959595;
}

.tool-list {
    display: flex;
    flex-direction: column;
    margin-top: 13px;
    font-size: 15px;
    color: #111;
}

.tool-item {
    justify-content: flex-start;
    gap: 10px;
    height: 46px;
    padding-left: 10px;
}

.cloud-note {
    display: flex;
    flex-direction: column;
    align-items: center;
    gap: 10px;
    margin-top: auto;
    padding: 20px 10px 5px;
    border-top: 1px solid #c8c8c8;
    font-size: 11px;
    line-height: 15px;
    text-align: center;
    color: #4b4b4b;
}

.cloud-note strong {
    font-size: 12px;
}

.cloud-note a {
    color: #0d55a4;
}

/* Taskbar */

.taskbar {
    display: flex;
    height: 40px;
    background: #e9d3dc;
}

.task {
    display: flex;
    align-items: center;
    justify-content: center;
    width: 48px;
    margin-right: 1px;
    padding: 0;
    border: none;
    background: none;
}

.task-start {
    margin-right: 3px;
}

.task-open {
    background: linear-gradient(#d50f5f, #d50f5f) center bottom / 40px 2px no-repeat;
}

.task-group {
    background-image: linear-gradient(90deg, #d50f5f 80%, #ea72a0 80%);
}

.task-active {
    background-color: #f6edf1;
    background-size: 48px 2px;
}

.tray {
    display: flex;
    align-items: center;
    gap: 9px;
    margin-left: auto;
    padding-right: 25px;
    color: #111;
}

.clock {
    display: flex;
    flex-direction: column;
    align-items: center;
    margin-right: 9px;
    font-size: 11px;
    line-height: 18px;
}
```
